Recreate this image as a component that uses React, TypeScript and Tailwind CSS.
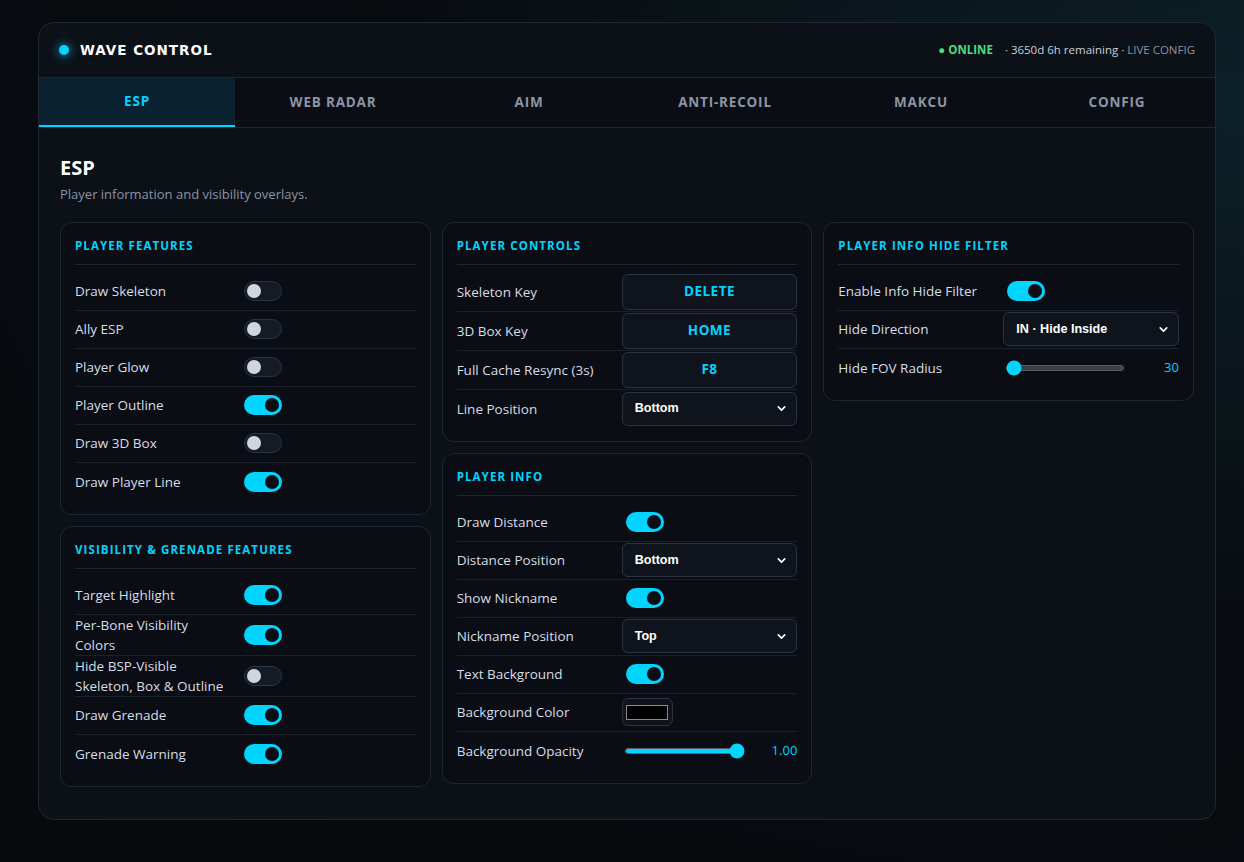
import { ChevronDown } from 'lucide-react';

const FONT = "font-['Open_Sans','Noto_Sans',sans-serif]";

const TABS = ['ESP', 'WEB RADAR', 'AIM', 'ANTI-RECOIL', 'MAKCU', 'CONFIG'];

function Toggle({ on }: { on: boolean }) {
  return (
    <div
      className={
        on
          ? 'ml-1 flex h-[20px] w-[38px] items-center justify-end rounded-full bg-[#00d4ff] px-[3px]'
          : 'ml-1 flex h-[20px] w-[38px] items-center justify-start rounded-full border border-[#2b3441] bg-[#151b24] px-[2px]'
      }
    >
      <div className={on ? 'h-[14px] w-[14px] rounded-full bg-[#0b0f15]' : 'h-[14px] w-[14px] rounded-full bg-[#cfd6e0]'} />
    </div>
  );
}

function Select({ value }: { value: string }) {
  return (
    <div className="flex h-[34px] w-full items-center justify-between rounded-md border border-[#2a3441] bg-[#0f141c] pl-3 pr-2">
      <span className="font-['Liberation_Sans',Arial,sans-serif] text-[12.6px] font-semibold text-white">{value}</span>
      <ChevronDown size={13} strokeWidth={3} className="text-white" />
    </div>
  );
}

function KeyButton({ value }: { value: string }) {
  return (
    <div className="flex h-[36px] w-full items-center justify-center rounded-md border border-[#2a3441] bg-[#0f141c] text-[13.5px] font-bold tracking-[0.5px] text-[#00d4ff]">
      {value}
    </div>
  );
}

function Slider({ pct, value }: { pct: number; value: string }) {
  return (
    <div className="flex w-full items-center">
      <div className="relative ml-[3px] h-[6px] w-[118px] rounded-full border border-[#5a6068] bg-[#3a3f46]">
        <div className="absolute inset-y-0 left-0 rounded-full bg-[#00d4ff]" style={{ width: `${pct}%` }} />
        <div
          className="absolute top-1/2 h-[15px] w-[15px] -translate-x-1/2 -translate-y-1/2 rounded-full bg-[#00d4ff]"
          style={{ left: `${Math.max(pct, 6)}%` }}
        />
      </div>
      <span className="flex-1 text-right text-[13px] text-[#00d4ff]">{value}</span>
    </div>
  );
}

function ColorSwatch() {
  return (
    <div className="flex h-[28px] w-[51px] items-center justify-center rounded-md border border-[#2a3441] bg-[#0f141c]">
      <div className="h-[15px] w-[42px] border border-[#8a8a8a] bg-black" />
    </div>
  );
}

type Row = { label: string; control: React.ReactNode };

function Card({ title, rows }: { title: string; rows: Row[] }) {
  return (
    <div className="rounded-xl border border-[#1f2631] bg-[#0a0d13] px-[14px] pb-[13px] pt-[14px]">
      <div className="border-b border-[#1f2631] pb-[9px] text-[11.5px] font-bold leading-[18px] tracking-[1.1px] text-[#00d4ff]">
        {title}
      </div>
      <div className="pt-[8px]">
        {rows.map((r, i) => (
          <div
            key={r.label}
            className={
              'flex min-h-[38px] items-center ' + (i < rows.length - 1 ? 'border-b border-[#1b212b]' : '')
            }
          >
            <div className="w-[165px] shrink-0 pr-[14px] text-[13.5px] leading-[20px] text-[#d6dde8]">{r.label}</div>
            <div className="flex flex-1 items-center py-px">{r.control}</div>
          </div>
        ))}
      </div>
    </div>
  );
}

export default function App() {
  const playerFeatures: Row[] = [
    { label: 'Draw Skeleton', control: <Toggle on={false} /> },
    { label: 'Ally ESP', control: <Toggle on={false} /> },
    { label: 'Player Glow', control: <Toggle on={false} /> },
    { label: 'Player Outline', control: <Toggle on /> },
    { label: 'Draw 3D Box', control: <Toggle on={false} /> },
    { label: 'Draw Player Line', control: <Toggle on /> },
  ];
  const visibility: Row[] = [
    { label: 'Target Highlight', control: <Toggle on /> },
    { label: 'Per-Bone Visibility Colors', control: <Toggle on /> },
    { label: 'Hide BSP-Visible Skeleton, Box & Outline', control: <Toggle on={false} /> },
    { label: 'Draw Grenade', control: <Toggle on /> },
    { label: 'Grenade Warning', control: <Toggle on /> },
  ];
  const controls: Row[] = [
    { label: 'Skeleton Key', control: <KeyButton value="DELETE" /> },
    { label: '3D Box Key', control: <KeyButton value="HOME" /> },
    { label: 'Full Cache Resync (3s)', control: <KeyButton value="F8" /> },
    { label: 'Line Position', control: <Select value="Bottom" /> },
  ];
  const info: Row[] = [
    { label: 'Draw Distance', control: <Toggle on /> },
    { label: 'Distance Position', control: <Select value="Bottom" /> },
    { label: 'Show Nickname', control: <Toggle on /> },
    { label: 'Nickname Position', control: <Select value="Top" /> },
    { label: 'Text Background', control: <Toggle on /> },
    { label: 'Background Color', control: <ColorSwatch /> },
    { label: 'Background Opacity', control: <Slider pct={96} value="1.00" /> },
  ];
  const hideFilter: Row[] = [
    { label: 'Enable Info Hide Filter', control: <Toggle on /> },
    { label: 'Hide Direction', control: <Select value="IN · Hide Inside" /> },
    { label: 'Hide FOV Radius', control: <Slider pct={0} value="30" /> },
  ];

  return (
    <div
      className={
        FONT +
        ' min-h-[862px] w-full bg-[radial-gradient(ellipse_at_100%_12%,#0c2027_0%,#080c10_48%,#07090c_100%)] pt-[22px]'
      }
    >
      <div className="ml-[38px] w-[1178px] overflow-hidden rounded-2xl border border-[#1f2833] bg-[#0c1017]">
        {/* header */}
        <div className="flex h-[55px] items-center justify-between border-b border-[#1f2833] pl-[20px] pr-[20px]">
          <div className="flex items-center gap-[11px]">
            <div className="h-[10px] w-[10px] rounded-full bg-[#00d4ff] shadow-[0_0_10px_2px_rgba(0,212,255,0.45)]" />
            <span className="font-['DejaVu_Sans',sans-serif] text-[13.5px] font-bold tracking-[1px] text-white">
              WAVE CONTROL
            </span>
          </div>
          <div className="flex items-center text-[11.5px]">
            <span className="font-bold text-[#4ade80]">● ONLINE</span>
            <span className="ml-[12px] text-[#c9d1dc]">· 3650d 6h remaining ·</span>
            <span className="ml-[3px] text-[#8a94a6]">LIVE CONFIG</span>
          </div>
        </div>

        {/* tabs */}
        <div className="grid h-[50px] grid-cols-6 border-b border-[#1f2833] bg-[#0a0d13]">
          {TABS.map((t, i) => (
            <div
              key={t}
              className={
                i === 0
                  ? 'flex items-center justify-center border-b-2 border-[#00d4ff] bg-[#0a2230] text-[13.5px] font-bold tracking-[0.8px] text-[#00d4ff]'
                  : 'flex items-center justify-center text-[13.5px] font-bold tracking-[0.8px] text-[#8a95a6]'
              }
            >
              {t}
            </div>
          ))}
        </div>

        {/* content */}
        <div className="px-[21px] pb-[32px] pt-[26px]">
          <h1 className="text-[20px] font-bold leading-[28px] text-white">ESP</h1>
          <p className="mt-[3px] text-[13px] text-[#8a94a6]">Player information and visibility overlays.</p>

          <div className="mt-[17px] grid grid-cols-3 items-start gap-[11px]">
            <div className="flex flex-col gap-[11px]">
              <Card title="PLAYER FEATURES" rows={playerFeatures} />
              <Card title="VISIBILITY & GRENADE FEATURES" rows={visibility} />
            </div>
            <div className="flex flex-col gap-[11px]">
              <Card title="PLAYER CONTROLS" rows={controls} />
              <Card title="PLAYER INFO" rows={info} />
            </div>
            <div className="flex flex-col gap-[11px]">
              <Card title="PLAYER INFO HIDE FILTER" rows={hideFilter} />
            </div>
          </div>
        </div>
      </div>
    </div>
  );
}
